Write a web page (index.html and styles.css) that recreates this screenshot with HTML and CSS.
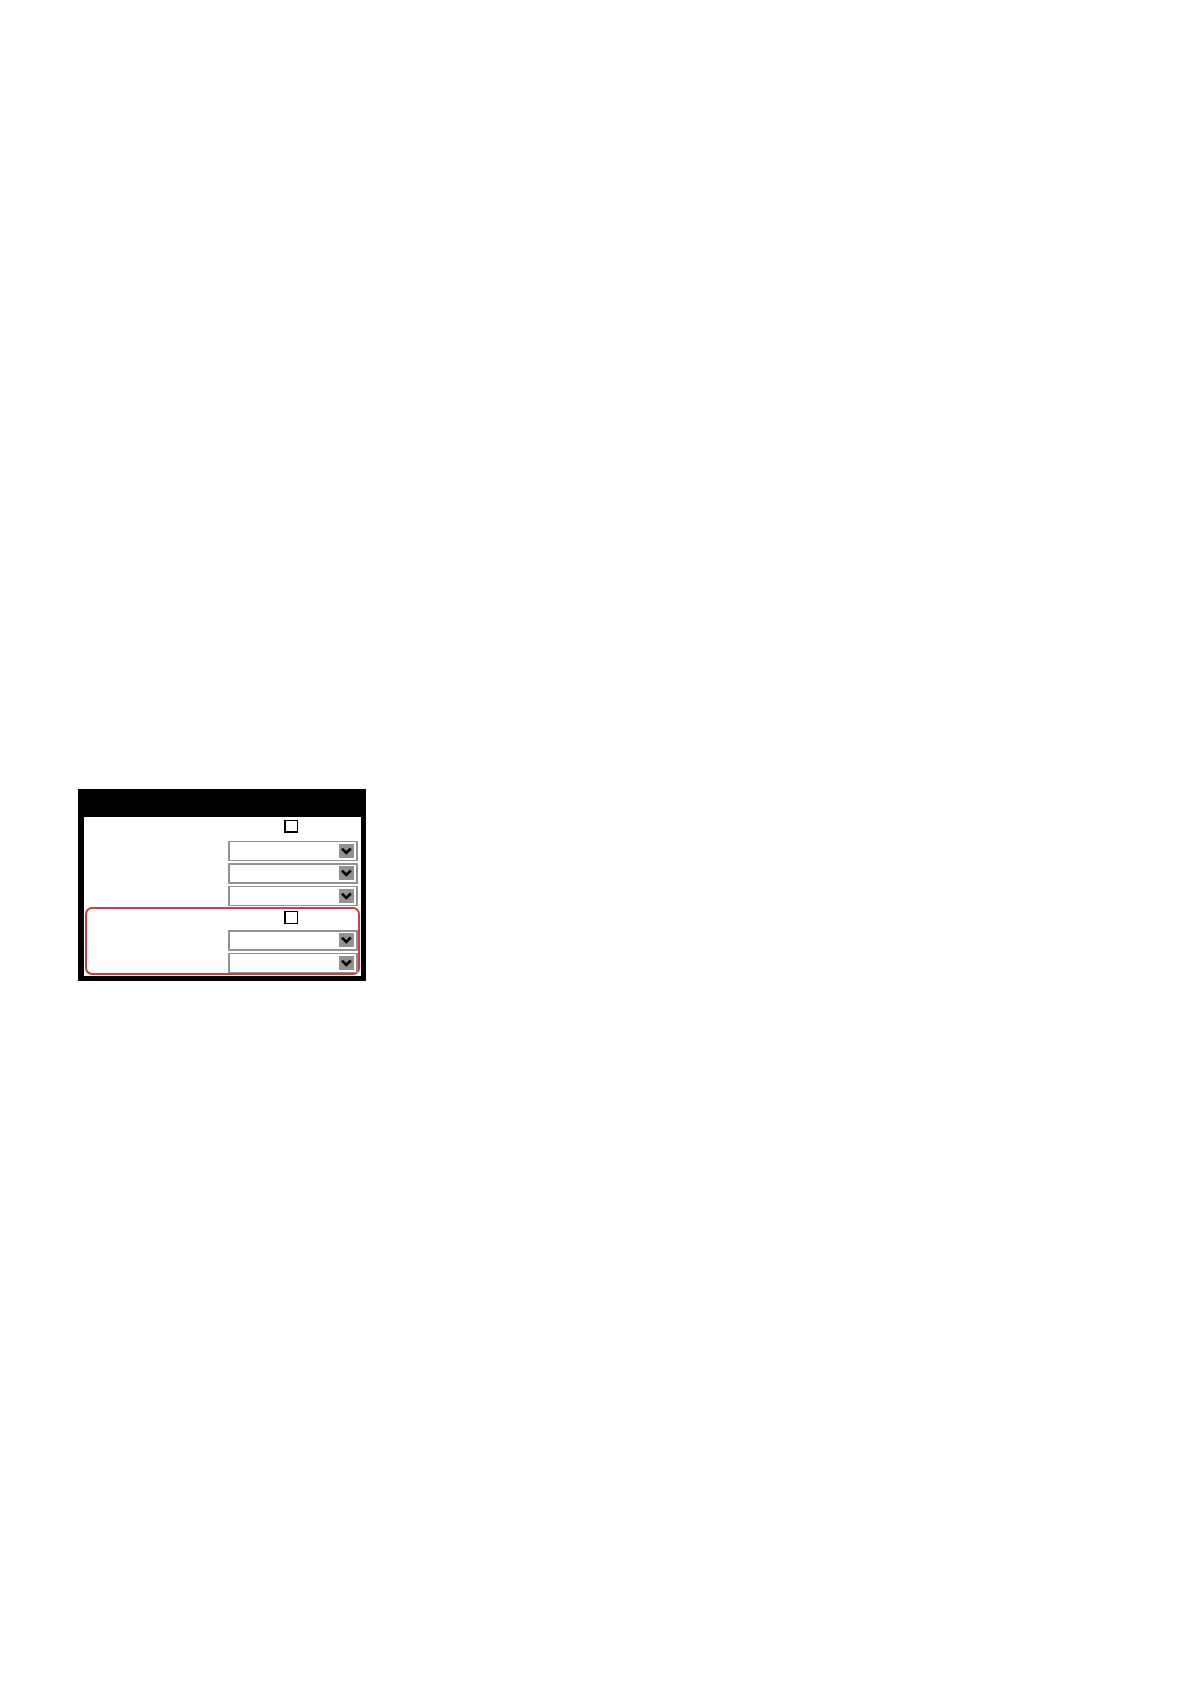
FILE: index.html
```html
<!DOCTYPE html>
<html lang="en">
<head>
<meta charset="utf-8">
<meta name="viewport" content="width=device-width, initial-scale=1">
<title>Settings</title>
<link rel="stylesheet" href="styles.css">
</head>
<body>
<svg class="symbols" aria-hidden="true">
  <symbol id="arrow" viewBox="0 0 15 14">
    <rect width="15" height="14" fill="#929292"/>
    <path d="M3 4.6 L7.3 8.9 L11.8 4.6" fill="none" stroke="#000" stroke-width="2.7"/>
  </symbol>
</svg>
<main class="page">
  <form class="panel">
    <header class="panel-header"></header>
    <div class="panel-body">
      <div class="group">
        <input class="check" type="checkbox" aria-label="Enable first group">
        <div class="field"><select class="select" aria-label="First group, option 1"><option></option></select><svg class="arrow" aria-hidden="true"><use href="#arrow"/></svg></div>
        <div class="field"><select class="select heavy" aria-label="First group, option 2"><option></option></select><svg class="arrow" aria-hidden="true"><use href="#arrow"/></svg></div>
        <div class="field"><select class="select" aria-label="First group, option 3"><option></option></select><svg class="arrow" aria-hidden="true"><use href="#arrow"/></svg></div>
      </div>
      <div class="group highlighted">
        <input class="check" type="checkbox" aria-label="Enable second group">
        <div class="field"><select class="select heavy" aria-label="Second group, option 1"><option></option></select><svg class="arrow" aria-hidden="true"><use href="#arrow"/></svg></div>
        <div class="field"><select class="select" aria-label="Second group, option 2"><option></option></select><svg class="arrow" aria-hidden="true"><use href="#arrow"/></svg></div>
      </div>
    </div>
  </form>
</main>
</body>
</html>
```
FILE: styles.css
```css
* {
  box-sizing: border-box;
}

body {
  margin: 0;
  background: #fff;
  font-family: "Liberation Sans", Arial, sans-serif;
  font-size: 12px;
}

.symbols {
  display: none;
}

.page {
  padding: 789px 78px 0;
}

.panel {
  max-width: 288px;
  border: solid #000;
  border-width: 0 5px 5px 6px;
}

.panel-header {
  height: 28px;
  background: #000;
}

.panel-body {
  display: flex;
  flex-direction: column;
  gap: 1px;
  padding: 0 1px 1px;
}

.group {
  display: flex;
  flex-direction: column;
  align-items: flex-end;
  gap: 2px;
  padding: 3px 2px 0;
}

.check {
  appearance: none;
  width: 14px;
  height: 13px;
  margin: 0 60px 6px 0;
  border: solid #000;
  border-width: 1px 1px 2px 2px;
  background: #fff;
}

.highlighted {
  padding: 2px 0 0;
  border: 2px solid #d03a40;
  border-radius: 7px;
}

.highlighted .check {
  margin-bottom: 4px;
  border-bottom-width: 1px;
}

.field {
  display: grid;
  grid-template-columns: 111px 15px 4px;
}

.select {
  grid-area: 1 / 1 / 2 / 4;
  appearance: none;
  width: 100%;
  height: 20px;
  margin: 0;
  padding: 0 20px 0 4px;
  border: solid #929292;
  border-width: 1px 2px;
  border-radius: 0;
  background: #fff;
  font: inherit;
}

.heavy {
  height: 21px;
  border-width: 2px;
}

.arrow {
  grid-area: 1 / 2 / 2 / 3;
  z-index: 1;
  width: 15px;
  height: 14px;
  margin-top: 3px;
  pointer-events: none;
}
```
